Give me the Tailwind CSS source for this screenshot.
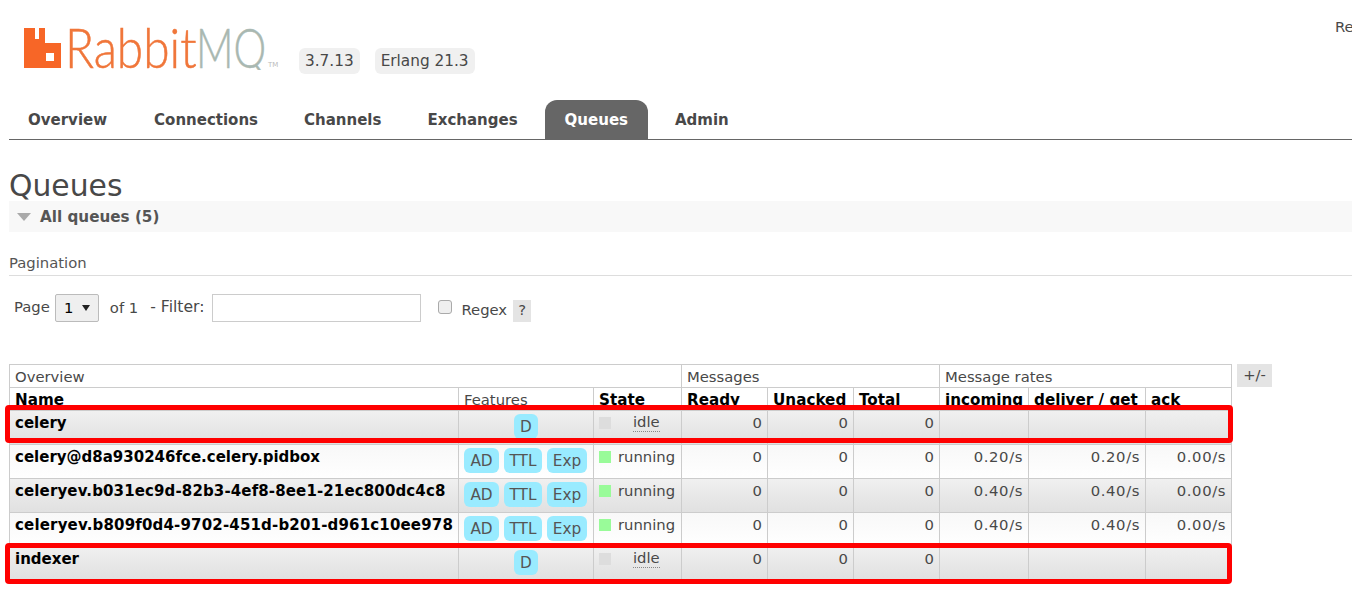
<!DOCTYPE html>
<html>
<head>
<meta charset="utf-8">
<script src="https://cdn.jsdelivr.net/npm/@tailwindcss/browser@4"></script>
</head>
<body class="bg-white">
<div class="relative h-[589px] w-[1352px] overflow-hidden font-['DejaVu_Sans',sans-serif] text-[14.8px] text-[#484848]">
  <span class="absolute left-[1335px] top-[16px]">Re</span>
  <header class="flex h-[100px] pl-[24px]">
    <div class="relative mt-[28px] h-[40px] w-[255px]">
      <svg width="37" height="40" viewBox="0 0 37 40" class="absolute top-0 left-0"><path fill="#f76627" fill-rule="evenodd" d="M0 0H11V11H15V0H21V15H37V40H0ZM22 25V33H30V25Z"/></svg>
      <span class="absolute top-[-1px] left-[41px] origin-left scale-x-[.87] font-['Lato',sans-serif] text-[55px] leading-[40px] font-light whitespace-nowrap text-[#f0763a] [-webkit-text-stroke:0.5px_#f0763a]">Rabbit</span>
      <span class="absolute top-[-2px] left-[172px] h-[44px] w-[72px] overflow-hidden"><span class="block origin-left scale-x-[.75] pt-[1px] font-['Lato',sans-serif] text-[55px] leading-[40px] font-light whitespace-nowrap text-[#a9b8b1] [-webkit-text-stroke:0.5px_#a9b8b1]">MQ</span></span>
      <span class="absolute top-[34px] left-[244px] text-[7px] leading-none text-[#bbb]">TM</span>
    </div>
    <div class="mt-[48px] ml-[20px] flex h-[26px] gap-[15px] text-[15.3px]">
      <span class="flex items-center rounded-[6px] bg-[#f0f0f0] px-[6px]">3.7.13</span>
      <span class="flex items-center rounded-[6px] bg-[#f0f0f0] px-[6px]">Erlang 21.3</span>
    </div>
  </header>
  <nav class="ml-[9px] flex h-[40px] border-b border-[#666] text-[15px] font-bold">
    <a class="flex items-center px-[19px] pt-[2px]">Overview</a>
    <a class="ml-[9px] flex items-center px-[19px] pt-[2px]">Connections</a>
    <a class="ml-[8px] flex items-center px-[19px] pt-[2px]">Channels</a>
    <a class="ml-[8px] flex items-center px-[19px] pt-[2px]">Exchanges</a>
    <a class="ml-[8px] flex items-center rounded-t-[12px] bg-[#666] px-[20px] pt-[2px] text-white">Queues</a>
    <a class="ml-[8px] flex items-center px-[19px] pt-[2px]">Admin</a>
  </nav>
  <h1 class="ml-[9px] mt-[27px] h-[34px] pt-[2px] text-[29.8px] leading-[34px] text-[#484848]">Queues</h1>
  <div class="ml-[9px] flex h-[31px] items-center bg-[#f8f8f8] text-[15.2px] font-bold text-[#555]">
    <svg width="14" height="8" class="mr-[9px] ml-[8px]"><path fill="#aaa" d="M0 0H14L7 8Z"/></svg><span class="pt-[1px]">All queues (5)</span>
  </div>
  <div class="ml-[9px] mt-[22px] h-[22px] border-b border-[#ddd] leading-[17px] text-[#555]">Pagination</div>
  <div class="ml-[14px] mt-[17px] flex h-[30px] items-center">
    <span class="mb-[1px]">Page</span>
    <span class="ml-[5px] flex h-[28px] w-[44px] items-center justify-center gap-[8px] rounded-[2px] border border-[#bbb] bg-[#efefef] text-black">1 <svg width="8" height="6"><path fill="#222" d="M0 0H8L4 6Z"/></svg></span>
    <span class="ml-[11px]">of 1</span>
    <span class="ml-[12px] mb-[1px] text-[15.6px]">- Filter:</span>
    <span class="ml-[8px] h-[28px] w-[209px] border border-[#ccc] bg-white"></span>
    <span class="ml-[17px] mb-[3px] h-[14px] w-[14px] rounded-[3px] border border-[#aaa] bg-[#efefef]"></span>
    <span class="ml-[9px] mt-[5px]">Regex</span>
    <span class="ml-[6px] mt-[5px] flex h-[22px] w-[18px] items-center justify-center bg-[#e4e4e4]">?</span>
  </div>
  <div class="relative mt-[41px] ml-[9px] flex items-start">
    <table class="w-[1222px] table-fixed border-collapse border border-[#ccc]">
      <colgroup><col class="w-[449px]"><col class="w-[135px]"><col class="w-[88px]"><col class="w-[86px]"><col class="w-[86px]"><col class="w-[86px]"><col class="w-[89px]"><col class="w-[117px]"><col class="w-[86px]"></colgroup>
      <thead>
        <tr class="h-[23px] leading-[21px]">
          <th colspan="3" class="border border-[#ccc] px-[5px] text-left font-normal">Overview</th>
          <th colspan="3" class="border border-[#ccc] px-[5px] text-left font-normal">Messages</th>
          <th colspan="3" class="border border-[#ccc] px-[5px] text-left font-normal">Message rates</th>
        </tr>
        <tr class="h-[23px] leading-[20px] text-[15.2px] text-black">
          <th class="border border-[#ccc] px-[5px] pt-[2px] text-left font-bold">Name</th>
          <th class="border border-[#ccc] px-[5px] pt-[1px] text-left text-[14.8px] font-normal text-[#484848]">Features</th>
          <th class="border border-[#ccc] px-[5px] pt-[2px] text-left font-bold">State</th>
          <th class="border border-[#ccc] px-[5px] pt-[2px] text-left font-bold">Ready</th>
          <th class="border border-[#ccc] px-[5px] pt-[2px] text-left font-bold">Unacked</th>
          <th class="border border-[#ccc] px-[5px] pt-[2px] text-left font-bold">Total</th>
          <th class="border border-[#ccc] px-[5px] pt-[2px] text-left font-bold">incoming</th>
          <th class="border border-[#ccc] px-[5px] pt-[2px] text-left font-bold">deliver / get</th>
          <th class="border border-[#ccc] px-[5px] pt-[2px] text-left font-bold">ack</th>
        </tr>
      </thead>
      <tbody class="leading-[22px]">
        <tr class="h-[34px] bg-linear-to-b from-[#f0f0f0] to-[#e0e0e0]">
          <td class="border border-[#ccc] px-[5px] pt-[1px] align-top text-[15px] font-bold text-black">celery</td>
          <td class="border border-[#ccc] align-top"><div class="mt-[3px] flex justify-center"><span class="flex h-[25px] items-center rounded-[6px] bg-[#99ebff] px-[6px] text-[15.3px] text-[#555]">D</span></div></td>
          <td class="border border-[#ccc] px-[5px] pt-[1px] align-top"><div class="mt-[1px] flex items-center"><span class="h-[12px] w-[12px] bg-[#ddd]"></span><span class="ml-[22px] border-b border-dotted border-[#888] leading-[18px]">idle</span></div></td>
          <td class="border border-[#ccc] px-[5px] pt-[1px] text-right align-top">0</td>
          <td class="border border-[#ccc] px-[5px] pt-[1px] text-right align-top">0</td>
          <td class="border border-[#ccc] px-[5px] pt-[1px] text-right align-top">0</td>
          <td class="border border-[#ccc]"></td><td class="border border-[#ccc]"></td><td class="border border-[#ccc]"></td>
        </tr>
        <tr class="h-[34px] bg-linear-to-b from-[#f8f8f8] to-white">
          <td class="border border-[#ccc] px-[5px] pt-[1px] align-top text-[15px] font-bold whitespace-nowrap text-black">celery@d8a930246fce.celery.pidbox</td>
          <td class="border border-[#ccc] px-[5px] align-top"><div class="mt-[3px] flex gap-[5px] text-[15.3px] text-[#555]"><span class="flex h-[25px] w-[35px] items-center justify-center rounded-[6px] bg-[#99ebff]">AD</span><span class="flex h-[25px] w-[38px] items-center justify-center rounded-[6px] bg-[#99ebff]">TTL</span><span class="flex h-[25px] w-[40px] items-center justify-center rounded-[6px] bg-[#99ebff]">Exp</span></div></td>
          <td class="border border-[#ccc] px-[5px] pt-[1px] align-top"><div class="flex items-center"><span class="h-[12px] w-[12px] bg-[#99fb99]"></span><span class="ml-[7px]">running</span></div></td>
          <td class="border border-[#ccc] px-[5px] pt-[1px] text-right align-top">0</td>
          <td class="border border-[#ccc] px-[5px] pt-[1px] text-right align-top">0</td>
          <td class="border border-[#ccc] px-[5px] pt-[1px] text-right align-top">0</td>
          <td class="border border-[#ccc] px-[5px] pt-[1px] text-right align-top tracking-[.6px]">0.20/s</td>
          <td class="border border-[#ccc] px-[5px] pt-[1px] text-right align-top tracking-[.6px]">0.20/s</td>
          <td class="border border-[#ccc] px-[5px] pt-[1px] text-right align-top tracking-[.6px]">0.00/s</td>
        </tr>
        <tr class="h-[34px] bg-linear-to-b from-[#f0f0f0] to-[#e0e0e0]">
          <td class="border border-[#ccc] px-[5px] pt-[1px] align-top text-[15px] font-bold tracking-[.13px] whitespace-nowrap text-black">celeryev.b031ec9d-82b3-4ef8-8ee1-21ec800dc4c8</td>
          <td class="border border-[#ccc] px-[5px] align-top"><div class="mt-[3px] flex gap-[5px] text-[15.3px] text-[#555]"><span class="flex h-[25px] w-[35px] items-center justify-center rounded-[6px] bg-[#99ebff]">AD</span><span class="flex h-[25px] w-[38px] items-center justify-center rounded-[6px] bg-[#99ebff]">TTL</span><span class="flex h-[25px] w-[40px] items-center justify-center rounded-[6px] bg-[#99ebff]">Exp</span></div></td>
          <td class="border border-[#ccc] px-[5px] pt-[1px] align-top"><div class="flex items-center"><span class="h-[12px] w-[12px] bg-[#99fb99]"></span><span class="ml-[7px]">running</span></div></td>
          <td class="border border-[#ccc] px-[5px] pt-[1px] text-right align-top">0</td>
          <td class="border border-[#ccc] px-[5px] pt-[1px] text-right align-top">0</td>
          <td class="border border-[#ccc] px-[5px] pt-[1px] text-right align-top">0</td>
          <td class="border border-[#ccc] px-[5px] pt-[1px] text-right align-top tracking-[.6px]">0.40/s</td>
          <td class="border border-[#ccc] px-[5px] pt-[1px] text-right align-top tracking-[.6px]">0.40/s</td>
          <td class="border border-[#ccc] px-[5px] pt-[1px] text-right align-top tracking-[.6px]">0.00/s</td>
        </tr>
        <tr class="h-[34px] bg-linear-to-b from-[#f8f8f8] to-white">
          <td class="border border-[#ccc] px-[5px] pt-[1px] align-top text-[15px] font-bold tracking-[.17px] whitespace-nowrap text-black">celeryev.b809f0d4-9702-451d-b201-d961c10ee978</td>
          <td class="border border-[#ccc] px-[5px] align-top"><div class="mt-[3px] flex gap-[5px] text-[15.3px] text-[#555]"><span class="flex h-[25px] w-[35px] items-center justify-center rounded-[6px] bg-[#99ebff]">AD</span><span class="flex h-[25px] w-[38px] items-center justify-center rounded-[6px] bg-[#99ebff]">TTL</span><span class="flex h-[25px] w-[40px] items-center justify-center rounded-[6px] bg-[#99ebff]">Exp</span></div></td>
          <td class="border border-[#ccc] px-[5px] pt-[1px] align-top"><div class="flex items-center"><span class="h-[12px] w-[12px] bg-[#99fb99]"></span><span class="ml-[7px]">running</span></div></td>
          <td class="border border-[#ccc] px-[5px] pt-[1px] text-right align-top">0</td>
          <td class="border border-[#ccc] px-[5px] pt-[1px] text-right align-top">0</td>
          <td class="border border-[#ccc] px-[5px] pt-[1px] text-right align-top">0</td>
          <td class="border border-[#ccc] px-[5px] pt-[1px] text-right align-top tracking-[.6px]">0.40/s</td>
          <td class="border border-[#ccc] px-[5px] pt-[1px] text-right align-top tracking-[.6px]">0.40/s</td>
          <td class="border border-[#ccc] px-[5px] pt-[1px] text-right align-top tracking-[.6px]">0.00/s</td>
        </tr>
        <tr class="h-[34px] bg-linear-to-b from-[#f0f0f0] to-[#e0e0e0]">
          <td class="border border-[#ccc] px-[5px] pt-[1px] align-top text-[15px] font-bold text-black">indexer</td>
          <td class="border border-[#ccc] align-top"><div class="mt-[3px] flex justify-center"><span class="flex h-[25px] items-center rounded-[6px] bg-[#99ebff] px-[6px] text-[15.3px] text-[#555]">D</span></div></td>
          <td class="border border-[#ccc] px-[5px] pt-[1px] align-top"><div class="mt-[1px] flex items-center"><span class="h-[12px] w-[12px] bg-[#ddd]"></span><span class="ml-[22px] border-b border-dotted border-[#888] leading-[18px]">idle</span></div></td>
          <td class="border border-[#ccc] px-[5px] pt-[1px] text-right align-top">0</td>
          <td class="border border-[#ccc] px-[5px] pt-[1px] text-right align-top">0</td>
          <td class="border border-[#ccc] px-[5px] pt-[1px] text-right align-top">0</td>
          <td class="border border-[#ccc]"></td><td class="border border-[#ccc]"></td><td class="border border-[#ccc]"></td>
        </tr>
      </tbody>
    </table>
    <span class="ml-[5px] flex h-[23px] w-[35px] items-center justify-center bg-[#e4e4e4]">+/-</span>
    <div class="absolute top-[41px] left-[-4px] h-[38px] w-[1228px] rounded-[4px] border-[5px] border-[#f00]"></div>
    <div class="absolute top-[179px] left-[-4px] h-[41px] w-[1227px] rounded-[4px] border-[5px] border-[#f00]"></div>
  </div>
</div>
</body>
</html>
